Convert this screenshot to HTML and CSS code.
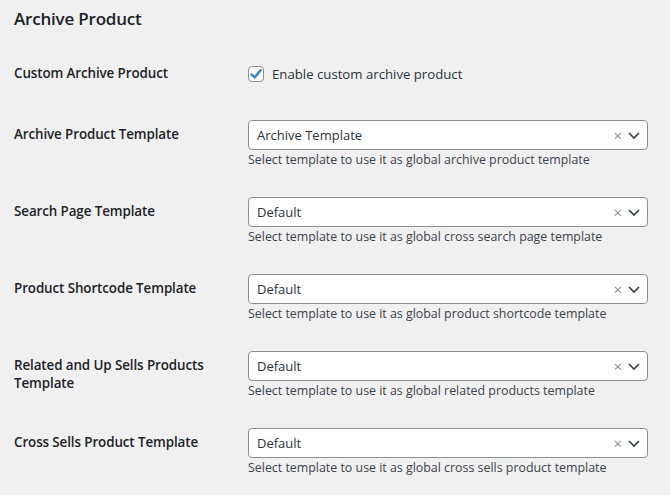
FILE: index.html
```html
<!DOCTYPE html>
<html>
<head>
<meta charset="utf-8">
<link rel="stylesheet" href="styles.css">
</head>
<body>
<div class="page">
  <h2 class="title">Archive Product</h2>
  <div class="row row-check">
    <div class="label">Custom Archive Product</div>
    <div class="field check-field">
      <span class="checkbox">
        <svg width="14" height="14" viewBox="0 0 14 14"><path d="M2.6 7.4 L5.6 10.4 L11.6 3.2" fill="none" stroke="#3582c4" stroke-width="2.4" stroke-linecap="round" stroke-linejoin="round"/></svg>
      </span>
      <span class="check-text">Enable custom archive product</span>
    </div>
  </div>
  <div class="row">
    <div class="label">Archive Product Template</div>
    <div class="field">
      <div class="select"><span class="value">Archive Template</span><span class="clear">×</span><svg class="chev" width="14" height="10" viewBox="0 0 14 10"><path d="M2 3 L7 8 L12 3" fill="none" stroke="#3c434a" stroke-width="1.7"/></svg></div>
      <div class="desc">Select template to use it as global archive product template</div>
    </div>
  </div>
  <div class="row">
    <div class="label">Search Page Template</div>
    <div class="field">
      <div class="select"><span class="value">Default</span><span class="clear">×</span><svg class="chev" width="14" height="10" viewBox="0 0 14 10"><path d="M2 3 L7 8 L12 3" fill="none" stroke="#3c434a" stroke-width="1.7"/></svg></div>
      <div class="desc">Select template to use it as global cross search page template</div>
    </div>
  </div>
  <div class="row">
    <div class="label">Product Shortcode Template</div>
    <div class="field">
      <div class="select"><span class="value">Default</span><span class="clear">×</span><svg class="chev" width="14" height="10" viewBox="0 0 14 10"><path d="M2 3 L7 8 L12 3" fill="none" stroke="#3c434a" stroke-width="1.7"/></svg></div>
      <div class="desc">Select template to use it as global product shortcode template</div>
    </div>
  </div>
  <div class="row">
    <div class="label two">Related and Up Sells Products Template</div>
    <div class="field">
      <div class="select"><span class="value">Default</span><span class="clear">×</span><svg class="chev" width="14" height="10" viewBox="0 0 14 10"><path d="M2 3 L7 8 L12 3" fill="none" stroke="#3c434a" stroke-width="1.7"/></svg></div>
      <div class="desc">Select template to use it as global related products template</div>
    </div>
  </div>
  <div class="row">
    <div class="label">Cross Sells Product Template</div>
    <div class="field">
      <div class="select"><span class="value">Default</span><span class="clear">×</span><svg class="chev" width="14" height="10" viewBox="0 0 14 10"><path d="M2 3 L7 8 L12 3" fill="none" stroke="#3c434a" stroke-width="1.7"/></svg></div>
      <div class="desc">Select template to use it as global cross sells product template</div>
    </div>
  </div>
</div>
</body>
</html>
```
FILE: styles.css
```css
html, body {
  margin: 0;
  padding: 0;
  background: #f0f0f1;
}
body {
  font-family: "Open Sans", "Noto Sans", sans-serif;
  color: #1d2327;
  width: 670px;
  height: 495px;
  overflow: hidden;
}
.page {
  padding: 0 0 0 14px;
}
.title {
  margin: 0;
  padding-top: 8px;
  font-size: 17px;
  line-height: 22px;
  font-weight: 600;
  height: 37px;
  letter-spacing: -0.2px;
}
.row {
  display: grid;
  grid-template-columns: 234px 400px;
  padding: 15px 0;
  height: 47px;
}
.row-check {
  padding: 21px 0 23px;
  height: 16px;
}
.label {
  font-size: 13.4px;
  font-weight: 600;
  line-height: 18px;
  padding-top: 5px;
  width: 200px;
  letter-spacing: -0.1px;
}
.row-check .label {
  padding-top: 0;
  line-height: 14px;
}
.check-field {
  display: flex;
  align-items: center;
  gap: 8px;
}
.checkbox {
  box-sizing: border-box;
  width: 16px;
  height: 16px;
  border: 1px solid #8c8f94;
  border-radius: 4px;
  background: #fff;
  display: flex;
  align-items: center;
  justify-content: center;
}
.checkbox svg { display: block; }
.check-text {
  font-size: 13.2px;
  line-height: 16px;
  color: #2c3338;
}
.select {
  box-sizing: border-box;
  width: 400px;
  height: 30px;
  background: #fff;
  border: 1px solid #8c8f94;
  border-radius: 4px;
  display: flex;
  align-items: center;
  padding: 0 6px 0 8px;
}
.value {
  flex: 1;
  font-size: 13px;
  color: #2c3338;
}
.clear {
  color: #8c8f94;
  font-size: 15px;
  line-height: 14px;
  margin-right: 5px;
}
.chev { display: block; }
.desc {
  font-size: 12.4px;
  line-height: 17px;
  color: #3c434a;
  margin-top: 1px;
  white-space: nowrap;
}
```
